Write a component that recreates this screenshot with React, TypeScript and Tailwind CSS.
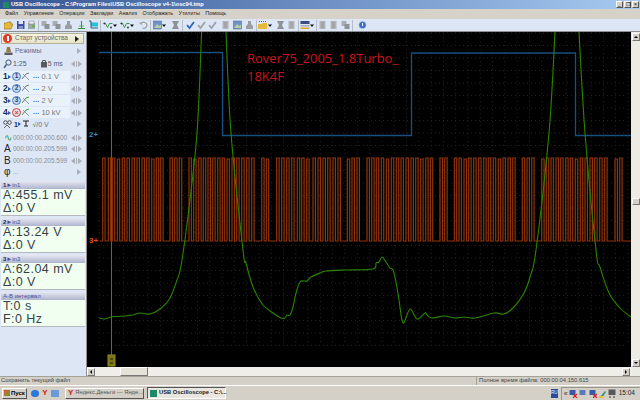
import type { ReactNode } from "react";

const sans = "font-['Liberation_Sans',Arial,sans-serif]";

// pulse start positions read off the screen, three strips of the trace
const strip1 = [8, 25, 37, 52, 67, 81, 96, 111, 126, 140, 155, 169, 182, 210, 224, 238, 267, 281, 296, 310, 324, 338, 353, 367, 381, 396, 410, 425, 440, 455, 485, 499, 530, 545, 560, 575, 592, 605, 620].map((z) => 100 + z / 3);
const strip2 = [0, 15, 30, 44, 60, 75, 103, 117, 132, 162, 176, 190, 205, 220, 235, 250, 264, 279, 294, 308, 323, 338].map((z) => 313 + z / 3);
const strip3 = [10, 39, 53, 82, 96, 111, 125, 140, 155, 170, 184, 199, 214, 228, 243, 257, 286, 300, 314, 344, 358, 372, 387, 401, 416, 430, 445, 460, 474, 489, 503, 518, 533, 564, 578].map((z) => 427 + z / 3);

const pulses = [...strip1, ...strip2, ...strip3];
const pulsePath =
  "M100 241 " +
  pulses
    .map((x, i) => {
      const top = 158 + (i % 7 === 3 ? 1 : 0);
      return `L${x.toFixed(1)} 241 L${x.toFixed(1)} ${top} L${(x + 2.4).toFixed(1)} ${top} L${(x + 2.4).toFixed(1)} 241`;
    })
    .join(" ") +
  " L631 241";

type Pt = [number, number];

// catmull-rom so the scope trace stays round instead of angular
function smooth(pts: Pt[]) {
  let d = `M${pts[0][0]} ${pts[0][1]}`;
  for (let i = 0; i < pts.length - 1; i++) {
    const p0 = pts[i - 1] ?? pts[i];
    const p1 = pts[i];
    const p2 = pts[i + 1];
    const p3 = pts[i + 2] ?? p2;
    const c1x = p1[0] + (p2[0] - p0[0]) / 6;
    const c1y = p1[1] + (p2[1] - p0[1]) / 6;
    const c2x = p2[0] - (p3[0] - p1[0]) / 6;
    const c2y = p2[1] - (p3[1] - p1[1]) / 6;
    d += ` C${c1x.toFixed(1)} ${c1y.toFixed(1)} ${c2x.toFixed(1)} ${c2y.toFixed(1)} ${p2[0]} ${p2[1]}`;
  }
  return d;
}

const greenLeft: Pt[] = [[99, 318], [105, 319], [111, 317], [125, 316], [133, 315], [140, 313], [150, 314], [160, 309], [170, 298], [177, 280], [181, 266], [188, 216], [197, 133], [201.6, 32]];
const greenMid: Pt[] = [[226, 32], [231, 133], [243, 250], [246, 263], [253, 287], [263, 305], [273, 313], [281, 318], [285, 318], [287, 315], [290, 315], [293, 307], [296, 293], [300, 282], [304, 281], [307, 281], [311, 277], [320, 273], [326, 271], [346, 270], [373, 269], [376, 263], [379, 262], [382, 257], [386, 262], [390, 268], [393, 270], [396, 282], [399, 300], [403, 323], [410, 309], [417, 319], [425, 313], [427, 315], [432, 318], [444, 316], [455, 318], [464, 317], [475, 318], [494, 313], [504, 314], [514, 307], [524, 293], [530, 277], [536, 250], [549, 133], [555, 32]];
const greenRight: Pt[] = [[579, 32], [585, 133], [596, 250], [600, 267], [609, 293], [620, 308], [631, 317]];

function Plot() {
  const cols = Array.from({ length: 44 }, (_, i) => 99 + i * 12.3);
  const rows = Array.from({ length: 26 }, (_, i) => 33 + i * 12.5);
  return (
    <svg viewBox="87 32 544 335" className="absolute inset-0 h-full w-full">
      {cols.map((x) => (
        <line key={x} x1={x} x2={x} y1={33} y2={345} stroke="#232323" strokeDasharray="1 3" />
      ))}
      {rows.map((y) => (
        <line key={y} x1={99} x2={625} y1={y} y2={y} stroke="#232323" strokeDasharray="1 3" />
      ))}
      <path d="M111.5 32V356" stroke="#6b6b12" fill="none" />
      <rect x="108" y="355" width="7" height="11" fill="#7a7412" stroke="#8d8a20" />
      <path d="M110 359h3M110 363h3" stroke="#222" />
      <path d="M99 52.5H222.5V135.5H411.5V53H575.5V135.5H631" stroke="#1a4f7f" strokeWidth="1.3" fill="none" />
      <path d={pulsePath} stroke="#8f340b" strokeWidth="1.2" fill="none" />
      {[greenLeft, greenMid, greenRight].map((pts) => (
        <path key={pts[0][0]} d={smooth(pts)} stroke="#2a8500" strokeWidth="1.1" fill="none" />
      ))}
    </svg>
  );
}

// small toolbar glyphs
function Ic({ children, w = 9 }: { children: ReactNode; w?: number }) {
  return (
    <svg width={w} height="10" viewBox={`0 0 ${w} 10`} className="shrink-0">
      {children}
    </svg>
  );
}

const Folder = () => (
  <Ic>
    <path d="M0 3h3l1-1h3v2h2l-2 5H0z" fill="#e7b93a" stroke="#8a6a18" strokeWidth=".6" />
  </Ic>
);
const Disk = () => (
  <Ic>
    <rect x="1" y="1" width="7.5" height="8" fill="#3b4fa8" />
    <rect x="2.5" y="1" width="4.5" height="3" fill="#dfe4f2" />
    <rect x="2.5" y="6" width="4.5" height="3" fill="#8590c0" />
  </Ic>
);
const Preview = () => (
  <Ic>
    <rect x="1" y="3" width="7" height="6" fill="#9aa" />
    <rect x="2" y="1" width="5" height="3" fill="#eee" stroke="#778" strokeWidth=".5" />
    <circle cx="6.5" cy="6" r="1.6" fill="#6ab04c" />
  </Ic>
);
const GreyCopy = () => (
  <Ic>
    <rect x="0.5" y="1" width="5" height="5" fill="#a9adb3" />
    <rect x="3.5" y="4" width="5" height="5" fill="#8f9398" />
  </Ic>
);
const GreyStamp = () => (
  <Ic>
    <path d="M3 1h3v3l2 2v3H1V6l2-2z" fill="#9b9ea3" />
  </Ic>
);
const Antenna = () => (
  <Ic>
    <path d="M4.5 1v7M1 8.5h7" stroke="#2f9a3a" strokeWidth="1.1" />
    <path d="M2 6h5" stroke="#2f9a3a" strokeWidth=".6" />
  </Ic>
);
const Cyan = () => (
  <Ic>
    <rect x="2" y="2.5" width="7" height="4" fill="#22c4dc" />
    <path d="M0 1h2v7h7" stroke="#16506a" fill="none" strokeWidth=".9" />
  </Ic>
);
const WaveIc = ({ c = "#2c8a3a" }: { c?: string }) => (
  <Ic w={10}>
    <path d="M.5 3.5h2l2 4 2-4h3" stroke={c} fill="none" strokeWidth=".9" />
    <circle cx="1.5" cy="3.5" r=".9" fill="#333" />
    <circle cx="8" cy="7.5" r=".9" fill="#333" />
  </Ic>
);
const Drop = () => (
  <svg width="4" height="10" viewBox="0 0 4 10" className="shrink-0">
    <path d="M0 4.5h4l-2 2.5z" fill="#111" />
  </svg>
);
const Undo = () => (
  <Ic>
    <path d="M2 4a3 3 0 1 1 1.5 4" stroke="#9ea1a6" fill="none" strokeWidth="1.3" />
    <path d="M0 2.5l3 0-.5 3z" fill="#9ea1a6" />
  </Ic>
);
const PicBlue = () => (
  <Ic>
    <rect x="0.5" y="1" width="8" height="8" fill="#6f93c9" stroke="#47628f" strokeWidth=".5" />
    <path d="M1 8l3-4 2 2 2-1v3z" fill="#b9d0a0" />
  </Ic>
);
const GreyTool = () => (
  <Ic>
    <path d="M1 1h7L6 5l2 4H1l2-4z" fill="#8f9398" />
  </Ic>
);
const Check = ({ c }: { c: string }) => (
  <Ic>
    <path d="M1 5l2.5 3L8 2" stroke={c} fill="none" strokeWidth="1.8" />
  </Ic>
);
const GreyDoc = () => (
  <Ic>
    <rect x="1.5" y="1" width="6" height="8" fill="#b0b3b8" />
    <path d="M3 3h3M3 5h3M3 7h3" stroke="#888" strokeWidth=".6" />
  </Ic>
);
const Help = () => (
  <Ic>
    <circle cx="4.5" cy="5" r="3.6" fill="#3f6fc4" stroke="#a9bde0" strokeWidth=".6" />
    <rect x="4" y="3" width="1" height="3" fill="#fff" />
  </Ic>
);
const FolderTab = () => (
  <Ic w={10}>
    <path d="M0 4h4l1-1h4v6H0z" fill="#e7b93a" />
    <path d="M1 1.5h7" stroke="#667" strokeDasharray="1 1" />
  </Ic>
);
const Rows = () => (
  <Ic w={10}>
    <rect x="0.5" y="1" width="9" height="3" fill="#3a4a86" />
    <rect x="0.5" y="5" width="9" height="1.5" fill="#aab" />
    <rect x="0.5" y="7.5" width="9" height="1.5" fill="#e1a52d" />
  </Ic>
);

const Sep = () => <div className="mx-[1.5px] h-[11px] w-px shrink-0 bg-[#b6bcc8]" />;

function Toolbar() {
  return (
    <div className="flex h-[13px] shrink-0 items-center border-b border-[#8d8f93] bg-[#dde6f4] pl-[4px]">
      <Folder />
      <div className="w-[3px]" />
      <Disk />
      <div className="w-[2px]" />
      <Preview />
      <Sep />
      <div className="w-[1px]" />
      <GreyCopy />
      <div className="w-[2px]" />
      <GreyCopy />
      <div className="w-[3px]" />
      <GreyStamp />
      <div className="w-[4px]" />
      <Antenna />
      <div className="w-[3px]" />
      <Cyan />
      <Sep />
      <div className="w-[1px]" />
      <WaveIc />
      <Drop />
      <div className="w-[3px]" />
      <WaveIc />
      <Drop />
      <div className="w-[5px]" />
      <Undo />
      <Sep />
      <div className="w-[1px]" />
      <PicBlue />
      <Drop />
      <div className="w-[5px]" />
      <GreyTool />
      <Sep />
      <div className="w-[2px]" />
      <Check c="#2f66b8" />
      <div className="w-[2px]" />
      <Check c="#9ea1a6" />
      <div className="w-[2px]" />
      <Check c="#9ea1a6" />
      <div className="w-[4px]" />
      <GreyDoc />
      <div className="w-[3px]" />
      <PicBlue />
      <div className="w-[3px]" />
      <GreyStamp />
      <Sep />
      <FolderTab />
      <Drop />
      <div className="w-[4px]" />
      <GreyTool />
      <div className="w-[2px]" />
      <GreyDoc />
      <Sep />
      <Rows />
      <Drop />
      <Sep />
      <GreyDoc />
      <div className="w-[2px]" />
      <GreyDoc />
      <div className="w-[3px]" />
      <GreyCopy />
      <Sep />
      <div className="w-[4px]" />
      <Help />
    </div>
  );
}

const Chevrons = () => (
  <div className="ml-auto mr-[4px] flex items-center gap-[1px] text-[#a9aeb8]">
    <span className="block h-0 w-0 border-y-[3px] border-r-[4px] border-y-transparent border-r-current" />
    <span className="block h-[6px] w-px bg-current" />
    <span className="block h-0 w-0 border-y-[3px] border-l-[4px] border-y-transparent border-l-current" />
  </div>
);

const Tri = ({ dark = false }: { dark?: boolean }) => (
  <span
    className={
      dark
        ? "ml-auto mr-[4px] block h-0 w-0 border-y-[3.5px] border-l-[4px] border-y-transparent border-l-[#222]"
        : "ml-auto mr-[5px] block h-0 w-0 border-y-[3.5px] border-l-[4px] border-y-transparent border-l-[#a9aeb8]"
    }
  />
);

function Chan({ n, value, off }: { n: number; value: string; off?: boolean }) {
  return (
    <div className="flex h-[11px] items-center">
      <div className="flex h-full w-[70px] shrink-0 items-center bg-[#e9f1fb] pl-[3px]">
        <span className="w-[5px] text-[8.5px] font-bold leading-none text-[#1a2a50]">{n}</span>
        <span className="mr-[1px] h-0 w-0 border-y-[2.5px] border-l-[3px] border-y-transparent border-l-[#2a5aa8]" />
        <span
          className={
            off
              ? "flex h-[9px] w-[9px] shrink-0 items-center justify-center rounded-full border border-[#d04040] bg-[#eadfe6] text-[7px] font-bold leading-none text-[#d04040]"
              : "flex h-[9px] w-[9px] shrink-0 items-center justify-center rounded-full border border-[#4a78b8] bg-[#c5dcf4] text-[6.5px] font-bold leading-none text-[#1f3f80]"
          }
        >
          {off ? "×" : n}
        </span>
        <svg width="8" height="9" viewBox="0 0 8 9" className="ml-[1px] shrink-0">
          <path d="M0 7L4 2L7 1" stroke={n > 2 ? "#3f9a3a" : "#70767e"} fill="none" />
          <path d="M1 2L4 5L7 8" stroke="#70767e" fill="none" strokeWidth=".7" />
        </svg>
        <span className="ml-[3px] text-[6.5px] font-bold leading-none tracking-wider text-[#2a5aa8]">...</span>
        <span className="ml-[2px] whitespace-nowrap text-[7.5px] leading-none text-[#74787f]">{value}</span>
      </div>
      <Chevrons />
    </div>
  );
}

function TimeRow({ label, value, labelClass }: { label: ReactNode; value: string; labelClass?: string }) {
  return (
    <div className="flex h-[11.5px] items-center pl-[4px]">
      <span className={"w-[9px] text-[10px] leading-none text-[#1c2230] " + (labelClass ?? "")}>{label}</span>
      <span className="text-[6.5px] leading-none text-[#8a8e96]">{value}</span>
      <Chevrons />
    </div>
  );
}

function Header({ children }: { children: ReactNode }) {
  return (
    <div className="mx-[1px] flex h-[8px] items-center bg-linear-to-b from-[#e6e8f2] to-[#aeb4cc] pl-[2px] text-[6px] leading-none text-[#4e4a96]">
      {children}
    </div>
  );
}

function Reading({ a, b }: { a: string; b: string }) {
  return (
    <div className="mx-[1px] flex h-[27px] flex-col border-b border-[#b4b8be] bg-[#f1fff1] pl-[2px] text-[12.5px] leading-[13.5px] tracking-[0.45px] text-[#3a3f46]">
      <div>{a}</div>
      <div>{b}</div>
    </div>
  );
}

function SidePanel() {
  return (
    <div className={"flex h-full w-[87px] shrink-0 flex-col border-r border-[#8d8f93] bg-[#dde6f5] pt-[1px] " + sans}>
      <div className="ml-[1px] mr-[2px] flex h-[11px] items-center border border-[#b4b296] bg-linear-to-b from-[#f6f4e2] to-[#e6e4ca] pl-[1px]">
        <span className="flex h-[9px] w-[9px] shrink-0 items-center justify-center rounded-full bg-[#e03a2c]">
          <span className="h-[5px] w-[2px] bg-white" />
        </span>
        <span className="ml-[3px] whitespace-nowrap text-[6.5px] leading-none text-[#6c6a60]">Старт устройства</span>
        <Tri dark />
      </div>
      <div className="mt-[1px] flex h-[11px] items-center pl-[4px]">
        <svg width="9" height="10" viewBox="0 0 9 10" className="shrink-0">
          <path d="M3 1h3l1 5H2z" fill="#9a7a44" />
          <rect x="0.5" y="6.5" width="8" height="2.5" fill="#5d5a58" />
        </svg>
        <span className="ml-[2px] text-[7px] leading-none text-[#6f6f90]">Режимы</span>
        <Tri />
      </div>
      <div className="mt-[1px] flex h-[13px] items-center pl-[3px] text-[7px] leading-none text-[#555a63]">
        <svg width="9" height="10" viewBox="0 0 9 10" className="shrink-0">
          <circle cx="5.5" cy="3.5" r="2.6" fill="#d8e4f2" stroke="#4a5a78" />
          <path d="M3.5 5.5L1 9" stroke="#4a5a78" strokeWidth="1.4" />
        </svg>
        <span className="ml-[1px]">1:25</span>
        <svg width="8" height="9" viewBox="0 0 8 9" className="ml-[13px] shrink-0">
          <rect x="1" y="3" width="6" height="5.5" fill="#555a63" />
          <path d="M2.5 3V1.5h3V3" stroke="#555a63" fill="none" />
        </svg>
        <span>5 ms</span>
        <Chevrons />
      </div>
      <div className="mt-[1px] flex flex-col gap-[1px]">
        <Chan n={1} value="0.1 V" />
        <Chan n={2} value="2 V" />
        <Chan n={3} value="2 V" />
        <Chan n={4} value="10 kV" off />
      </div>
      <div className="flex h-[12px] items-center pl-[3px] text-[7px] leading-none text-[#6a6f78]">
        <svg width="9" height="9" viewBox="0 0 9 9" className="shrink-0">
          <circle cx="2.5" cy="2.5" r="1.8" fill="none" stroke="#555" />
          <circle cx="6.5" cy="2.5" r="1.8" fill="none" stroke="#555" />
          <path d="M1 8l3-3 3 3" stroke="#666" fill="none" />
        </svg>
        <span className="ml-[2px] font-bold text-[#1a2a50]">1</span>
        <span className="ml-[0.5px] h-0 w-0 border-y-[2.5px] border-l-[3px] border-y-transparent border-l-[#2a5aa8]" />
        <svg width="6" height="8" viewBox="0 0 6 8" className="ml-[2px] shrink-0">
          <path d="M0 1h6M3 1v5M1 6h4" stroke="#222" fill="none" />
        </svg>
        <span className="ml-[3px] text-[#2f9a3a]">√</span>
        <span>/0 V</span>
        <Tri />
      </div>
      <div className="mt-[2px]">
        <TimeRow label={<span className="text-[#2f9a3a]">∿</span>} value="000:00:00.200.600" />
        <TimeRow label="A" value="000:00:00.205.599" />
        <TimeRow label="B" value="000:00:00.205.599" />
      </div>
      <div className="flex h-[11px] items-center pl-[4px]">
        <span className="w-[9px] text-[10px] leading-none text-[#1c2230]">φ</span>
        <span className="text-[6.5px] leading-none text-[#8a8e96]">...</span>
        <Tri />
      </div>
      <div className="mt-[3px] flex flex-col gap-[2px]">
        <div>
          <Header>
            <b className="text-[#1a2a50]">1</b>►in1
          </Header>
          <Reading a="A:455.1 mV" b="Δ:0 V" />
        </div>
        <div>
          <Header>
            <b className="text-[#1a2a50]">2</b>►in2
          </Header>
          <Reading a="A:13.24 V" b="Δ:0 V" />
        </div>
        <div>
          <Header>
            <b className="text-[#1a2a50]">3</b>►in3
          </Header>
          <Reading a="A:62.04 mV" b="Δ:0 V" />
        </div>
        <div>
          <Header>A-B интервал</Header>
          <Reading a="T:0 s" b="F:0 Hz" />
        </div>
      </div>
    </div>
  );
}

const ScrollBtn = ({ dir }: { dir: "l" | "r" | "u" | "d" }) => (
  <div className="flex h-[8px] w-[8px] shrink-0 items-center justify-center border border-b-[#777] border-l-[#fff] border-r-[#777] border-t-[#fff] bg-[#d4d0c8]">
    {dir === "l" && <span className="h-0 w-0 border-y-[2px] border-r-[2px] border-y-transparent border-r-black" />}
    {dir === "r" && <span className="h-0 w-0 border-y-[2px] border-l-[2px] border-y-transparent border-l-black" />}
    {dir === "u" && <span className="h-0 w-0 border-x-[2px] border-b-[2px] border-x-transparent border-b-black" />}
    {dir === "d" && <span className="h-0 w-0 border-x-[2px] border-t-[2px] border-x-transparent border-t-black" />}
  </div>
);

function Tray() {
  return (
    <div className="ml-auto flex items-center">
      <span className="mr-[3px] flex h-[9px] w-[7px] items-center justify-center bg-[#2a4a9a] text-[4.5px] leading-none text-white">RU</span>
      <div className="flex h-[13px] items-center border-l border-t border-l-[#9a978e] border-t-[#9a978e] pl-[2px] pr-[5px]">
        <span className="text-[7px] leading-none text-[#333]">«</span>
        {["#3a5aa8", "#5a7ab8", "#3a5aa8"].map((c, i) => (
          <svg key={i} width="9" height="9" viewBox="0 0 9 9" className="ml-[1px] shrink-0">
            <rect x="0.5" y="1" width="6" height="5" fill={c} />
            {i !== 1 && <path d="M4 5l4 4M8 5L4 9" stroke="#d02020" strokeWidth="1.1" />}
          </svg>
        ))}
        <svg width="8" height="9" viewBox="0 0 8 9" className="ml-[1px] shrink-0">
          <path d="M1 8L6 2l1 1-4 6z" fill="#2a9a7a" />
          <rect x="0" y="7" width="4" height="2" fill="#e0c040" />
        </svg>
        <svg width="8" height="9" viewBox="0 0 8 9" className="ml-[1px] shrink-0">
          <rect x="0.5" y="0.5" width="7" height="5.5" fill="#55585e" />
          <path d="M1 8h2M5 8h2" stroke="#333" />
        </svg>
        <span className="ml-[3px] text-[6.5px] leading-none text-[#222]">15:04</span>
      </div>
    </div>
  );
}

export default function App() {
  return (
    <div className={"flex h-[400px] w-[640px] flex-col overflow-hidden bg-[#d4d0c8] " + sans}>
      <div className="flex h-[9px] shrink-0 items-center bg-linear-to-r from-[#345593] via-[#6d8fc4] to-[#a6caf0] pl-[3px]">
        <span className="mr-[2px] h-[6px] w-[6px] bg-[#1c8a68]" />
        <span className="whitespace-nowrap text-[5.7px] font-bold leading-none text-white">USB Oscilloscope - C:\Program Files\USB Oscilloscope v4-1\osc94.tmp</span>
        <div className="ml-auto mr-[1px] flex gap-[1px]">
          {["_", "❐", "×"].map((b) => (
            <span key={b} className="flex h-[7px] w-[7px] items-center justify-center border border-b-[#555] border-r-[#555] border-l-white border-t-white bg-[#d4d0c8] text-[5px] leading-none text-black">
              {b}
            </span>
          ))}
        </div>
      </div>
      <div className="flex h-[10px] shrink-0 items-center gap-[5.5px] bg-[#d6d2ca] pl-[5px] text-[5.4px] leading-none text-[#222]">
        {["Файл", "Управление", "Операции", "Закладки", "Анализ", "Отображать", "Утилиты", "Помощь"].map((m) => (
          <span key={m}>{m}</span>
        ))}
      </div>
      <Toolbar />
      <div className="flex min-h-0 flex-1">
        <SidePanel />
        <div className="flex min-w-0 flex-1 flex-col">
          <div className="relative flex-1 bg-black">
            <Plot />
            <div className="absolute left-[160px] top-[17px] font-['Open_Sans',sans-serif] text-[13px] leading-[18px] text-[#c8141c]">
              Rover75_2005_1.8Turbo_
              <br />
              18K4F
            </div>
            <span className="absolute left-[2px] top-[99px] text-[8px] font-bold leading-none text-[#2a8ad0]">2+</span>
            <span className="absolute left-[2px] top-[205px] text-[8px] font-bold leading-none text-[#e05010]">3+</span>
          </div>
          <div className="flex h-[9px] shrink-0 items-center bg-[#efeee8]">
            <ScrollBtn dir="l" />
            <div className="ml-[25px] h-[9px] w-[28px] border border-b-[#777] border-r-[#777] border-l-white border-t-white bg-[#e4e1d8]" />
            <div className="ml-auto mr-[1px]">
              <ScrollBtn dir="r" />
            </div>
          </div>
        </div>
        <div className="flex w-[9px] shrink-0 flex-col items-center bg-[#ecebe4] pt-[1px]">
          <ScrollBtn dir="u" />
          <div className="mt-[157px] h-[7px] w-[8px] border border-b-[#777] border-r-[#777] border-l-white border-t-white bg-[#d4d0c8]" />
          <div className="mb-[9px] mt-auto">
            <ScrollBtn dir="d" />
          </div>
        </div>
      </div>
      <div className="flex h-[9px] shrink-0 text-[5.8px] leading-none text-[#444]">
        <div className="flex w-[476px] items-center border-t border-[#a5a298] pl-[1px]">Сохранить текущий файл</div>
        <div className="flex flex-1 items-center border-l border-t border-[#a5a298] pl-[2px]">Полное время файла: 000:00:04.150.615</div>
      </div>
      <div className="flex h-[15px] shrink-0 items-center border-t border-white bg-[#d4d0c8]">
        <div className="ml-[2px] flex h-[11px] w-[25px] items-center border border-b-[#555] border-r-[#555] border-l-white border-t-white pl-[1px]">
          <span className="mr-[1px] h-[6px] w-[6px] shrink-0 bg-linear-to-br from-[#e04030] to-[#30a040]" />
          <span className="whitespace-nowrap text-[6px] font-bold leading-none text-black">Пуск</span>
        </div>
        <div className="ml-[4px] flex items-center gap-[2px]">
          <span className="h-[7px] w-[8px] rounded-full bg-[#2a78d8]" />
          <span className="flex h-[8px] w-[8px] items-center justify-center text-[8px] font-bold leading-none text-[#d02020]">Y</span>
          <span className="h-[7px] w-[8px] bg-[#6a9ad8]" />
        </div>
        <div className="ml-[6px] flex h-[11px] w-[79px] items-center border border-b-[#555] border-r-[#555] border-l-white border-t-white pl-[2px]">
          <span className="mr-[2px] text-[8px] font-bold leading-none text-[#d02020]">Y</span>
          <span className="whitespace-nowrap text-[5.8px] leading-none text-[#555]">Яндекс.Деньги — Янде...</span>
        </div>
        <div className="ml-[3px] flex h-[12px] w-[79px] items-center border border-b-white border-r-white border-l-[#555] border-t-[#555] bg-[#e8e6df] pl-[2px]">
          <span className="mr-[2px] h-[7px] w-[7px] shrink-0 bg-[#1c8a68]" />
          <span className="whitespace-nowrap text-[5.8px] font-bold leading-none text-[#222]">USB Oscilloscope - C:\...</span>
        </div>
        <Tray />
      </div>
    </div>
  );
}
